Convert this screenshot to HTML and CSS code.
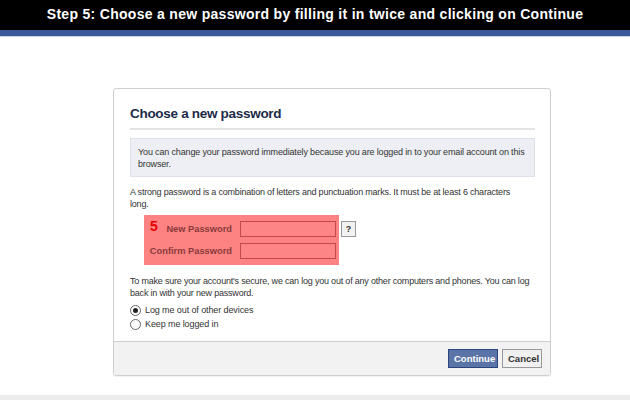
FILE: index.html
```html
<!DOCTYPE html>
<html>
<head>
<meta charset="utf-8">
<link rel="stylesheet" href="styles.css">
</head>
<body>
<div class="topbar">Step 5: Choose a new password by filling it in twice and clicking on Continue</div>
<div class="bluebar"></div>
<div class="main">
  <div class="card">
    <div class="card-body">
      <h2 class="title">Choose a new password</h2>
      <div class="info">You can change your password immediately because you are logged in to your email account on this browser.</div>
      <p class="para para1">A strong password is a combination of letters and punctuation marks. It must be at least 6 characters long.</p>
      <div class="highlight">
        <div class="row">
          <span class="step">5</span>
          <label class="lbl">New Password</label>
          <span class="field"></span>
          <span class="help">?</span>
        </div>
        <div class="row">
          <label class="lbl">Confirm Password</label>
          <span class="field"></span>
        </div>
      </div>
      <p class="para para2">To make sure your account's secure, we can log you out of any other computers and phones. You can log back in with your new password.</p>
      <div class="radios">
        <div class="radio-row"><span class="radio checked"></span>Log me out of other devices</div>
        <div class="radio-row"><span class="radio"></span>Keep me logged in</div>
      </div>
    </div>
    <div class="card-footer">
      <span class="btn btn-primary">Continue</span>
      <span class="btn btn-cancel">Cancel</span>
    </div>
  </div>
</div>
<div class="bottomline"></div>
</body>
</html>
```
FILE: styles.css
```css
html, body {
  margin: 0;
  padding: 0;
  background: #fff;
  font-family: "Liberation Sans", Arial, sans-serif;
  width: 630px;
  height: 400px;
  overflow: hidden;
}
.topbar {
  height: 30px;
  background: #000;
  color: #fff;
  font-weight: bold;
  font-size: 14px;
  letter-spacing: 0.3px;
  line-height: 29px;
  text-align: center;
}
.bluebar {
  height: 6px;
  background: #3b5998;
  border-bottom: 1px solid #c9d1e2;
}
.main {
  padding-top: 51px;
  height: 307px;
}
.card {
  margin-left: 113px;
  width: 436px;
  border: 1px solid #cfcfcf;
  border-radius: 3px;
  box-shadow: 0 1px 1px rgba(0,0,0,0.06);
  background: #fff;
}
.card-body {
  padding: 15px 15px 10px 16px;
  height: 227px;
}
.title {
  margin: 0;
  font-size: 13.5px;
  letter-spacing: -0.3px;
  font-weight: bold;
  color: #1c2a47;
  line-height: 20px;
  padding-bottom: 4px;
  border-bottom: 2px solid #e3e3e3;
}
.info {
  margin-top: 8px;
  background: #edeff4;
  border: 1px solid #dde1ea;
  padding: 7px 7px 6px 7px;
  font-size: 9px;
  letter-spacing: -0.15px;
  line-height: 12px;
  color: #333;
}
.para {
  margin: 9px 0 0 0;
  font-size: 9px;
  letter-spacing: -0.2px;
  line-height: 12px;
  color: #333;
}
.para1 {
  max-width: 396px;
}
.highlight {
  margin-top: 5px;
  margin-left: 14px;
  width: 195px;
  height: 50px;
  box-sizing: border-box;
  background: #fd8282;
  padding-top: 6px;
}
.row {
  display: flex;
  align-items: center;
  height: 16px;
  margin-bottom: 6px;
  position: relative;
}
.step {
  position: absolute;
  left: 6px;
  top: -3px;
  color: #e80000;
  font-weight: bold;
  font-size: 14px;
}
.lbl {
  width: 88px;
  text-align: right;
  font-size: 9.3px;
  font-weight: bold;
  color: #8a3a3a;
  margin-right: 8px;
}
.field {
  width: 94px;
  height: 14px;
  border: 1px solid #c44a4a;
  background: #fd8585;
}
.help {
  position: absolute;
  left: 197px;
  top: 0;
  width: 13px;
  height: 14px;
  border: 1px solid #999;
  background: #f2f2f2;
  font-size: 9px;
  font-weight: bold;
  color: #333;
  text-align: center;
  line-height: 14px;
}
.para2 {
  margin-top: 10px;
}
.radios {
  margin-top: 4px;
  font-size: 9px;
  letter-spacing: -0.1px;
  color: #333;
}
.radio-row {
  display: flex;
  align-items: center;
  height: 14px;
}
.radio {
  width: 9px;
  height: 9px;
  border: 1px solid #666;
  border-radius: 50%;
  margin-right: 4px;
  box-sizing: content-box;
  position: relative;
  background: #fff;
}
.radio.checked::after {
  content: "";
  position: absolute;
  left: 2px;
  top: 2px;
  width: 5px;
  height: 5px;
  border-radius: 50%;
  background: #222;
}
.card-footer {
  background: #f2f2f2;
  border-top: 1px solid #ccc;
  height: 33px;
  display: flex;
  justify-content: flex-end;
  align-items: center;
  padding-right: 8px;
  gap: 4px;
}
.btn {
  font-size: 9.5px;
  font-weight: bold;
  height: 17px;
  line-height: 17px;
  padding: 0 5px;
}
.btn-primary {
  background: #5b74a8;
  border: 1px solid #29447e;
  color: #fff;
  width: 38px;
  text-align: center;
}
.btn-cancel {
  background: #f0f0f0;
  border: 1px solid #999;
  color: #333;
  width: 28px;
  text-align: center;
}
.bottomline {
  position: absolute;
  left: 0;
  top: 395px;
  width: 630px;
  height: 5px;
  background: #ececec;
}
```
